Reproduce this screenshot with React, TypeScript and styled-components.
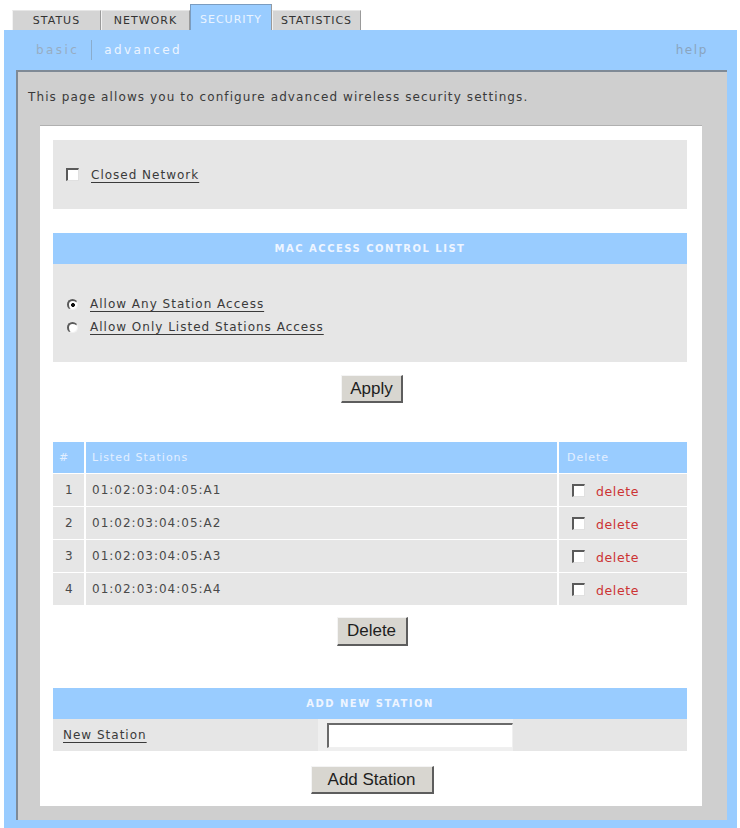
import React, { useState } from "react";
import styled, { createGlobalStyle } from "styled-components";

const GlobalStyle = createGlobalStyle`
  html, body {
    margin: 0;
    padding: 0;
    background: #ffffff;
  }
  body {
    font-family: "DejaVu Sans", Verdana, sans-serif;
    font-size: 12px;
    letter-spacing: 1px;
    color: #3a3a3a;
  }
`;

const stations = [
  "01:02:03:04:05:A1",
  "01:02:03:04:05:A2",
  "01:02:03:04:05:A3",
  "01:02:03:04:05:A4",
];

function App() {
  const [closed, setClosed] = useState(false);
  const [access, setAccess] = useState("any");
  const [marked, setMarked] = useState<boolean[]>([false, false, false, false]);
  const [newStation, setNewStation] = useState("");

  const toggleMark = (i: number) => {
    setMarked((prev) => prev.map((m, j) => (j === i ? !m : m)));
  };

  return (
    <Page>
      <GlobalStyle />
      <TabBar>
        <Tab>STATUS</Tab>
        <Tab>NETWORK</Tab>
        <Tab $active>SECURITY</Tab>
        <Tab>STATISTICS</Tab>
      </TabBar>

      <BluePanel>
        <SubNav>
          <SubLinks>
            <SubLink>basic</SubLink>
            <SubDivider />
            <SubLink $active>advanced</SubLink>
          </SubLinks>
          <HelpLink>help</HelpLink>
        </SubNav>

        <GrayPanel>
          <Intro>
            This page allows you to configure advanced wireless security settings.
          </Intro>

          <WhiteBox>
            <Section $height={69}>
              <OptionRow>
                <CheckBox
                  type="checkbox"
                  checked={closed}
                  onChange={() => setClosed(!closed)}
                />
                <Label>Closed Network</Label>
              </OptionRow>
            </Section>

            <Header $top={24}>MAC ACCESS CONTROL LIST</Header>
            <Section $height={98}>
              <RadioList>
                <OptionRow>
                  <Radio
                    type="radio"
                    name="access"
                    checked={access === "any"}
                    onChange={() => setAccess("any")}
                  />
                  <Label>Allow Any Station Access</Label>
                </OptionRow>
                <OptionRow>
                  <Radio
                    type="radio"
                    name="access"
                    checked={access === "listed"}
                    onChange={() => setAccess("listed")}
                  />
                  <Label>Allow Only Listed Stations Access</Label>
                </OptionRow>
              </RadioList>
            </Section>

            <ButtonRow $top={13} $bottom={39}>
              <Button $width={62}>Apply</Button>
            </ButtonRow>

            <Table>
              <HeadCell>#</HeadCell>
              <HeadCell>Listed Stations</HeadCell>
              <HeadCell $pad={8}>Delete</HeadCell>
              {stations.map((mac, i) => (
                <React.Fragment key={mac}>
                  <Cell>{i + 1}</Cell>
                  <Cell $pad={6}>{mac}</Cell>
                  <Cell $pad={13}>
                    <CheckBox
                      type="checkbox"
                      checked={marked[i]}
                      onChange={() => toggleMark(i)}
                    />
                    <DeleteText>delete</DeleteText>
                  </Cell>
                </React.Fragment>
              ))}
            </Table>

            <ButtonRow $top={12} $bottom={42}>
              <Button $width={71} $height={29}>Delete</Button>
            </ButtonRow>

            <Header>ADD NEW STATION</Header>
            <AddRow>
              <AddLabel>
                <Label>New Station</Label>
              </AddLabel>
              <InputCell>
                <TextInput
                  type="text"
                  value={newStation}
                  onChange={(e) => setNewStation(e.currentTarget.value)}
                />
              </InputCell>
              <AddLabel />
            </AddRow>

            <ButtonRow $top={15} $bottom={0}>
              <Button $width={123}>Add Station</Button>
            </ButtonRow>
          </WhiteBox>
        </GrayPanel>
      </BluePanel>
    </Page>
  );
}

const Page = styled.div`
  width: 733px;
  margin-left: 4px;
`;

const TabBar = styled.div`
  display: flex;
  align-items: flex-end;
  height: 30px;
  padding-left: 8px;
`;

const Tab = styled.div<{ $active?: boolean }>`
  box-sizing: border-box;
  width: ${(p) => (p.$active ? 82 : 89)}px;
  height: ${(p) => (p.$active ? 26 : 20)}px;
  display: flex;
  align-items: center;
  justify-content: center;
  font-size: 11px;
  letter-spacing: 1px;
  color: ${(p) => (p.$active ? "#eaf4ff" : "#333333")};
  background: ${(p) => (p.$active ? "#99ccff" : "#d4d4d4")};
  border-left: 1px solid ${(p) => (p.$active ? "#7a9cc0" : "#f2f2f2")};
  border-right: 1px solid #9a9a9a;
  border-top: 1px solid ${(p) => (p.$active ? "#7a9cc0" : "#e6e6e6")};
  padding-top: ${(p) => (p.$active ? 4 : 0)}px;
`;

const BluePanel = styled.div`
  background: #99ccff;
  padding: 0 10px 9px 12px;
`;

const SubNav = styled.div`
  height: 40px;
  display: flex;
  align-items: center;
  justify-content: space-between;
  padding: 0 19px 0 20px;
  letter-spacing: 2.4px;
`;

const SubLinks = styled.div`
  display: flex;
  align-items: center;
  gap: 12px;
`;

const SubLink = styled.span<{ $active?: boolean }>`
  color: ${(p) => (p.$active ? "#edf5ff" : "#97adc3")};
`;

const SubDivider = styled.span`
  width: 1px;
  height: 20px;
  background: #8aaccd;
`;

const HelpLink = styled.span`
  color: #8aa4be;
  letter-spacing: 1.6px;
`;

const GrayPanel = styled.div`
  background: #cfcfcf;
  border-top: 2px solid #7f8a96;
  border-left: 2px solid #7f8a96;
  padding: 0 25px 14px 22px;
`;

const Intro = styled.div`
  height: 53px;
  display: flex;
  align-items: center;
  margin-left: -12px;
  padding-bottom: 4px;
  box-sizing: border-box;
  letter-spacing: 1.1px;
  color: #3a3a3a;
`;

const WhiteBox = styled.div`
  background: #ffffff;
  border-top: 1px solid #b0b0b0;
  padding: 14px 15px 12px 13px;
  display: flex;
  flex-direction: column;
`;

const Section = styled.div<{ $height: number }>`
  height: ${(p) => p.$height}px;
  background: #e6e6e6;
  display: flex;
  align-items: center;
  padding-left: 13px;
`;

const RadioList = styled.div`
  display: flex;
  flex-direction: column;
  gap: 9px;
  padding-top: 5px;
`;

const OptionRow = styled.label`
  display: flex;
  align-items: center;
  gap: 12px;
`;

const Label = styled.span`
  text-decoration: underline;
  text-underline-offset: 3px;
  color: #3a3a3a;
`;

const CheckBox = styled.input`
  appearance: none;
  box-sizing: border-box;
  margin: 0;
  width: 13px;
  height: 13px;
  background: #ffffff;
  border-top: 2px solid #5a5a5a;
  border-left: 2px solid #5a5a5a;
  border-right: 1px solid #e0e0e0;
  border-bottom: 1px solid #e0e0e0;
  flex-shrink: 0;
  &:checked {
    background: #ffffff
      radial-gradient(circle, #222 0 2.5px, transparent 3px);
  }
`;

const Radio = styled.input`
  appearance: none;
  box-sizing: border-box;
  margin: 0 0 0 1px;
  width: 11px;
  height: 11px;
  border-radius: 50%;
  background: #ffffff;
  border-top: 2px solid #5a5a5a;
  border-left: 2px solid #5a5a5a;
  border-right: 1px solid #f2f2f2;
  border-bottom: 1px solid #f2f2f2;
  flex-shrink: 0;
  &:checked {
    background: radial-gradient(circle, #111 0 1.8px, #ffffff 2.2px);
  }
`;

const Header = styled.div<{ $top?: number }>`
  margin-top: ${(p) => p.$top ?? 0}px;
  height: 31px;
  background: #99ccff;
  display: flex;
  align-items: center;
  justify-content: center;
  font-size: 10px;
  font-weight: bold;
  letter-spacing: 1.5px;
  color: #eef5ff;
`;

const ButtonRow = styled.div<{ $top: number; $bottom: number }>`
  display: flex;
  justify-content: center;
  margin: ${(p) => p.$top}px 0 ${(p) => p.$bottom}px;
`;

const Button = styled.button<{ $width: number; $height?: number }>`
  box-sizing: border-box;
  width: ${(p) => p.$width}px;
  height: ${(p) => p.$height ?? 28}px;
  padding: 0;
  margin-left: 4px;
  font-family: "Liberation Sans", Arial, sans-serif;
  font-size: 17px;
  letter-spacing: 0;
  color: #1e1e1e;
  background: #d8d6d0;
  border-top: 1px solid #f4f4f4;
  border-left: 1px solid #f4f4f4;
  border-right: 2px solid #5d5d5d;
  border-bottom: 2px solid #5d5d5d;
`;

const Table = styled.div`
  display: grid;
  grid-template-columns: 31px 471px 128px;
  grid-auto-rows: 32px;
  grid-template-rows: 31px;
  gap: 1px 2px;
  background: #ffffff;
`;

const HeadCell = styled.div<{ $pad?: number }>`
  background: #99ccff;
  display: flex;
  align-items: center;
  padding-left: ${(p) => p.$pad ?? 6}px;
  font-size: 11px;
  color: #e3efff;
`;

const Cell = styled.div<{ $pad?: number }>`
  background: #e6e6e6;
  display: flex;
  align-items: center;
  gap: 11px;
  padding-left: ${(p) => p.$pad ?? 12}px;
  color: #4a4a4a;
`;

const DeleteText = styled.span`
  color: #cc3333;
  font-size: 12.5px;
  letter-spacing: 0.6px;
  padding-top: 3px;
`;

const AddRow = styled.div`
  display: grid;
  grid-template-columns: 265px 195px 174px;
  height: 32px;
`;

const AddLabel = styled.div`
  background: #e6e6e6;
  display: flex;
  align-items: center;
  padding-left: 10px;
`;

const InputCell = styled.div`
  background: #efefef;
  display: flex;
  align-items: center;
  padding-left: 9px;
`;

const TextInput = styled.input`
  box-sizing: border-box;
  width: 186px;
  height: 25px;
  margin: 0;
  background: #ffffff;
  border-top: 2px solid #6a6a6a;
  border-left: 2px solid #6a6a6a;
  border-right: 1px solid #f0f0f0;
  border-bottom: 1px solid #f0f0f0;
  outline: none;
  font-family: "DejaVu Sans", sans-serif;
  font-size: 12px;
`;

export default App;
